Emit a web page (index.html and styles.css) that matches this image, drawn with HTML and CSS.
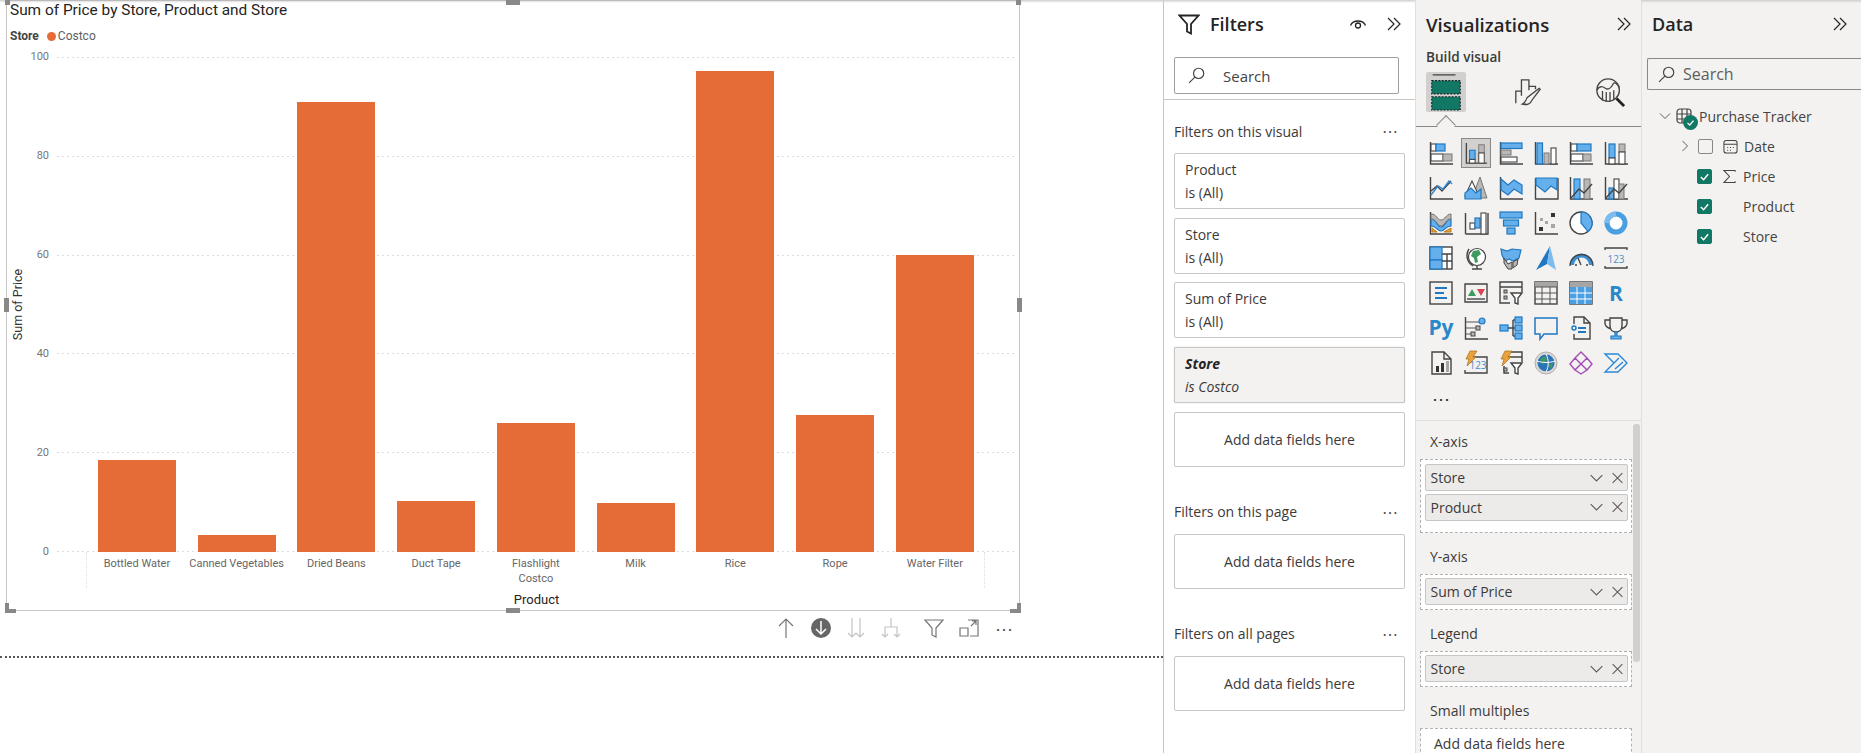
FILE: index.html
```html
<!DOCTYPE html>
<html lang="en">
<head>
    <meta charset="UTF-8">
    <meta name="viewport" content="width=device-width, initial-scale=1">
    <title>Purchase Tracker</title>
    <link rel="stylesheet" href="styles.css">
</head>
<body>
<svg class="defs" aria-hidden="true">
    <symbol id="chevrons" viewBox="0 0 16 16"><path d="M2 2l6 6-6 6M8 2l6 6-6 6"/></symbol>
    <symbol id="search" viewBox="0 0 16 16"><circle cx="10" cy="6" r="4.8"/><path d="M6.5 9.5L1 15"/></symbol>
    <symbol id="down" viewBox="0 0 12 12"><path d="M1 3.5l5 5 5-5"/></symbol>
    <symbol id="close" viewBox="0 0 12 12"><path d="M1.5 1.5l9 9M10.5 1.5l-9 9"/></symbol>
    <symbol id="check" viewBox="0 0 12 12"><path d="M2 6.5l3 3 5-6"/></symbol>
</svg>
<div class="topshade"></div>
<div class="app">
    <main class="canvas">
        <section class="visual">
            <i class="handle h-tl"></i><i class="handle h-tc"></i><i class="handle h-tr"></i>
            <i class="handle h-ml"></i><i class="handle h-mr"></i>
            <i class="handle h-bl"></i><i class="handle h-bc"></i><i class="handle h-br"></i>
            <div class="chart-title">Sum of Price by Store, Product and Store</div>
            <div class="chart-legend"><b>Store</b><i class="legend-dot"></i><span>Costco</span></div>
            <div class="chart-body">
                <div class="y-title"><span>Sum of Price</span></div>
                <div class="y-ticks"><span>100</span><span>80</span><span>60</span><span>40</span><span>20</span><span>0</span></div>
                <div class="plot">
                    <div class="gridlines"><i></i><i></i><i></i><i></i><i></i><i></i></div>
                    <div class="bars">
                        <div class="bar" style="height:18.5%"></div>
                        <div class="bar" style="height:3.4%"></div>
                        <div class="bar" style="height:91%"></div>
                        <div class="bar" style="height:10.3%"></div>
                        <div class="bar" style="height:26.1%"></div>
                        <div class="bar" style="height:9.9%"></div>
                        <div class="bar" style="height:97.2%"></div>
                        <div class="bar" style="height:27.6%"></div>
                        <div class="bar" style="height:60%"></div>
                    </div>
                </div>
            </div>
            <div class="x-labels">
                <span>Bottled Water</span><span>Canned Vegetables</span><span>Dried Beans</span>
                <span>Duct Tape</span><span>Flashlight<br>Costco</span><span>Milk</span>
                <span>Rice</span><span>Rope</span><span>Water Filter</span>
            </div>
            <div class="x-title">Product</div>
        </section>
        <div class="visual-tools">
            <svg viewBox="0 0 22 22"><path class="t-dark" d="M11 21V2M4 9l7-7 7 7"/></svg>
            <svg viewBox="0 0 22 22"><circle class="t-fill" cx="11" cy="11" r="10"/><path class="t-white" d="M11 4v13M6 12l5 5 5-5"/></svg>
            <svg viewBox="0 0 22 22"><path class="t-light" d="M7 1v19M3 16l4 4 4-4M15 1v19M11 16l4 4 4-4"/></svg>
            <svg viewBox="0 0 22 22"><path class="t-light" d="M11 1v9M5 20v-10h12v10M2 17l3 3 3-3M14 17l3 3 3-3"/></svg>
            <svg class="tool-gap" viewBox="0 0 22 22"><path class="t-dark" d="M2 3h18l-7 8v9l-4-2v-7z"/></svg>
            <svg viewBox="0 0 22 22"><path class="t-dark" d="M10 3h10v16h-8M2 11h8v8H2zM13 9l5-5M14 4h4v4"/></svg>
            <div class="tool-dots">&#8943;</div>
        </div>
        <div class="page-end"></div>
    </main>

    <aside class="filters">
        <div class="filters-head">
            <svg class="funnel" viewBox="0 0 22 22"><path d="M1.5 2.5h19l-7.5 8.5v9.5l-4-2V11z"/></svg>
            <h2>Filters</h2>
            <svg class="eye" viewBox="0 0 18 14"><path d="M1.5 8.5C4 2.5 14 2.5 16.5 8.5"/><circle cx="9" cy="8.5" r="2.5"/></svg>
            <svg class="chev"><use href="#chevrons"/></svg>
        </div>
        <div class="filters-search">
            <svg class="search-icon"><use href="#search"/></svg>
            <span>Search</span>
        </div>
        <div class="filters-list">
            <div class="filter-head"><span>Filters on this visual</span><em>&#8943;</em></div>
            <div class="filter-card"><div>Product</div><div>is (All)</div></div>
            <div class="filter-card"><div>Store</div><div>is (All)</div></div>
            <div class="filter-card"><div>Sum of Price</div><div>is (All)</div></div>
            <div class="filter-card filter-active"><div><b>Store</b></div><div>is Costco</div></div>
            <div class="filter-add">Add data fields here</div>
            <div class="filter-head filter-next"><span>Filters on this page</span><em>&#8943;</em></div>
            <div class="filter-add">Add data fields here</div>
            <div class="filter-head filter-next"><span>Filters on all pages</span><em>&#8943;</em></div>
            <div class="filter-add">Add data fields here</div>
        </div>
    </aside>

    <aside class="viz">
        <div class="pane-head">
            <h2>Visualizations</h2>
            <svg class="chev"><use href="#chevrons"/></svg>
        </div>
        <div class="build-label">Build visual</div>
        <div class="viz-tabs">
            <div class="viz-tab viz-tab-on">
                <svg viewBox="0 0 32 40"><path class="tab-rule" d="M2 2h24"/><rect class="tab-block" x="1" y="8" width="30" height="14"/><rect class="tab-block" x="1" y="25" width="30" height="14"/></svg>
            </div>
            <div class="viz-tab">
                <svg viewBox="0 0 32 32"><path class="vk" d="M3 28V15h6M9 20V3h8v11M17 10h7v3M11 29h3"/><path class="vk" d="M28 12L15 22c-1 3-3 6-5 7 4 1 9 0 10-4l9-12z"/></svg>
            </div>
            <div class="viz-tab">
                <svg viewBox="0 0 32 32"><circle class="vk" cx="14" cy="14" r="12"/><path class="vk" d="M2 14c3-5 6-4 9-2s6 0 8-4 5 0 7 3M8 25V15M12 26V16M16 26V16M20 24V14"/><path class="vk-heavy" d="M23 23l8 8"/></svg>
            </div>
        </div>
        <div class="viz-grid">
            <!-- row 1 -->
            <svg viewBox="0 0 24 24"><path class="vk" d="M1.5 1v22H24"/><rect class="vw" x="2" y="3" width="5" height="7"/><rect class="vb" x="7" y="3" width="9" height="7"/><rect class="vw" x="2" y="13" width="12" height="7"/><rect class="vg" x="14" y="13" width="9" height="7"/></svg>
            <svg class="viz-on" viewBox="0 0 24 24"><path class="vk" d="M1.5 1v22H24"/><rect class="vb" x="5" y="9" width="6" height="10"/><rect class="vw" x="5" y="19" width="6" height="4"/><rect class="vg" x="15" y="3" width="6" height="9"/><rect class="vw" x="15" y="12" width="6" height="11"/></svg>
            <svg viewBox="0 0 24 24"><path class="vk" d="M1.5 1v22H24"/><rect class="vb" x="2" y="2" width="21" height="5.5"/><rect class="vg" x="2" y="9" width="10" height="5"/><rect class="vw" x="2" y="16" width="16" height="5"/></svg>
            <svg viewBox="0 0 24 24"><path class="vk" d="M1.5 1v22H24"/><rect class="vb" x="3" y="2" width="5.5" height="21"/><rect class="vg" x="10" y="12" width="5" height="11"/><rect class="vw" x="17" y="7" width="5" height="16"/></svg>
            <svg viewBox="0 0 24 24"><path class="vk" d="M1.5 1v22H24"/><rect class="vw" x="2" y="3" width="6" height="7"/><rect class="vb" x="8" y="3" width="14" height="7"/><rect class="vw" x="2" y="13" width="12" height="7"/><rect class="vg" x="14" y="13" width="8" height="7"/></svg>
            <svg viewBox="0 0 24 24"><path class="vk" d="M1.5 1v22H24"/><rect class="vb" x="5" y="3" width="6" height="14"/><rect class="vw" x="5" y="17" width="6" height="6"/><rect class="vg" x="15" y="3" width="6" height="8"/><rect class="vw" x="15" y="11" width="6" height="12"/></svg>
            <!-- row 2 -->
            <svg viewBox="0 0 24 24"><path class="vk" d="M1.5 1v22H24"/><path class="vk" d="M2 15l6-5 5 5 9-10"/><path class="vl" d="M2 19l7-9 5 3 6-8 3 3"/></svg>
            <svg viewBox="0 0 24 24"><path class="vg" d="M8 22l8-21 7 21z"/><path class="vw" d="M8 5l-7 15h14z"/><path class="vb" d="M1 23v-6l6-5 5 5 5-4v10z"/></svg>
            <svg viewBox="0 0 24 24"><path class="vk" d="M1.5 1v22H24"/><path class="vb" d="M2 3l7 6 6-5 8 5v9l-8-5-6 6-7-5z"/></svg>
            <svg viewBox="0 0 24 24"><path class="vk" d="M1.5 2v21H24V2"/><path class="vb" d="M2 2h21v12l-6-4-6 6-9-7z"/></svg>
            <svg viewBox="0 0 24 24"><path class="vk" d="M1.5 1v22H24"/><rect class="vb" x="5" y="3" width="6" height="20"/><rect class="vg" x="15" y="3" width="6" height="20"/><path class="vk" d="M2 22l8-9 5 4 8-9"/></svg>
            <svg viewBox="0 0 24 24"><path class="vk" d="M1.5 1v22H24"/><rect class="vb" x="5" y="12" width="5" height="11"/><rect class="vw" x="10" y="3" width="5" height="20"/><rect class="vg" x="15" y="8" width="5" height="15"/><path class="vk" d="M2 22l8-9 5 4 8-9"/></svg>
            <!-- row 3 -->
            <svg viewBox="0 0 24 24"><path class="vk" d="M1.5 1v22H24"/><path class="vo" d="M3 17l5 4h-5zM15 21l7-4v4z"/><path class="vb" d="M2 8c6 0 6 8 10 8s5-8 10-8v7c-6 0-6 5-10 5S8 15 2 15z"/><path class="vg" d="M2 3c6 0 6 6 10 6s5-6 10-6v5c-6 0-6 7-10 7S8 8 2 8z"/></svg>
            <svg viewBox="0 0 24 24"><path class="vk" d="M1.5 23V2M1.5 23H24V2"/><rect class="vw" x="6" y="12" width="5" height="6"/><rect class="vb" x="11" y="7" width="5" height="10"/><rect class="vw" x="17" y="2" width="5" height="21"/></svg>
            <svg viewBox="0 0 24 24"><rect class="vb" x="1" y="1" width="22" height="6"/><rect class="vb" x="4.5" y="9" width="15" height="6"/><rect class="vb" x="8" y="17" width="8" height="6"/></svg>
            <svg viewBox="0 0 24 24"><path class="vk" d="M1.5 1v22H24"/><rect class="vd" x="17" y="2" width="4" height="4"/><rect class="vd" x="5" y="16" width="4" height="4"/><rect class="vg-n" x="6" y="7" width="3" height="3"/><rect class="vg-n" x="11" y="10" width="3" height="3"/><rect class="vg-n" x="17" y="13" width="4" height="4"/></svg>
            <svg viewBox="0 0 24 24"><circle class="vw-k" cx="12" cy="12" r="11"/><path class="vb" d="M12 1a11 11 0 0 1 7 19.5L12 12z"/></svg>
            <svg viewBox="0 0 24 24"><circle class="vring" cx="12" cy="12" r="9"/><path class="vring-w" d="M3 12A9 9 0 0 1 12 3"/></svg>
            <!-- row 4 -->
            <svg viewBox="0 0 24 24"><rect class="vw-k" x="1" y="1" width="22" height="22"/><rect class="vb" x="1" y="1" width="12" height="13"/><rect class="vb" x="1" y="14" width="12" height="9"/><path class="vk" d="M13 8h10M18 8v15M13 15h10"/></svg>
            <svg viewBox="0 0 24 24"><circle class="vglobe" cx="13" cy="11" r="8.5"/><path class="vgreen" d="M9 5l6-1 2 4-4 3 1 5-3 1-1-5-3-2z"/><path class="vk" d="M5 3a12 12 0 0 0 4 17M13 20v3M8 23h10"/></svg>
            <svg viewBox="0 0 24 24"><path class="vb" d="M2 3l6 2 5-2 9 1-2 8-6 3-4-2-4 2-3-6z"/><path class="vg-k" d="M5 12l4 6 4-2v7H9l-4-6zM14 16l5-3-1 6-4 3z"/></svg>
            <svg viewBox="0 0 24 24"><path class="vazure" d="M16 0L2 24l11-6z"/><path class="vazure-l" d="M16 0l-3 18 9 6z"/></svg>
            <svg viewBox="0 0 24 24"><path class="vgauge" d="M3 19a9.5 9.5 0 0 1 19 0"/><path class="vk" d="M1 20a11.5 11.5 0 0 1 23 0M12 19l-3-7M6 19h2M17 19h2"/></svg>
            <svg viewBox="0 0 24 24"><path class="vk" d="M1 4V2h22v2M1 20v2h22v-2"/><text class="vtext" x="12" y="17">123</text></svg>
            <!-- row 5 -->
            <svg viewBox="0 0 24 24"><rect class="vk" x="1" y="1" width="22" height="22"/><path class="vline-b" d="M6 7h12M6 12h9M6 17h12"/></svg>
            <svg viewBox="0 0 24 24"><path class="vk" d="M1 3h22v18H1z"/><path class="vgreen" d="M4 15l4-7 4 7z"/><path class="vred" d="M13 8h8l-4 7z"/><path class="vk" d="M3 18h18"/></svg>
            <svg viewBox="0 0 24 24"><path class="vk" d="M23 11V1H1v21h10M1 6h22"/><rect class="vg-k" x="5" y="9" width="3" height="3"/><rect class="vg-k" x="5" y="15" width="3" height="3"/><path class="vw-k" d="M12 12h11l-4 5v6l-3-1v-5z"/></svg>
            <svg viewBox="0 0 24 24"><rect class="vk" x="1" y="1" width="22" height="22"/><rect class="vg-n" x="1" y="1" width="22" height="5"/><path class="vk-thin" d="M1 6h22M1 12h22M1 18h22M8 6v17M16 6v17"/></svg>
            <svg viewBox="0 0 24 24"><rect class="vk" x="1" y="1" width="22" height="22"/><rect class="vg-n" x="1" y="1" width="22" height="5"/><rect class="vb-n" x="1" y="6" width="15" height="17"/><rect class="vb-n" x="16" y="6" width="7" height="17"/><path class="vk-white" d="M1 12h22M1 18h22M8 6v17M16 6v17"/></svg>
            <svg viewBox="0 0 24 24"><text class="vcode" x="12" y="20">R</text></svg>
            <!-- row 6 -->
            <svg viewBox="0 0 24 24"><text class="vcode" x="12" y="19">Py</text></svg>
            <svg viewBox="0 0 24 24"><path class="vk" d="M1.5 1v22H24"/><path class="vk-thin" d="M2 6h14M2 12h10M2 18h6"/><circle class="vb" cx="18" cy="5" r="3"/><rect class="vg-k" x="12" y="10" width="4" height="4"/><rect class="vg-k" x="7" y="16" width="4" height="4"/></svg>
            <svg viewBox="0 0 24 24"><path class="vk" d="M9 12h5M14 4v16M14 4h2M14 12h2M14 20h2"/><rect class="vb" x="1" y="9" width="8" height="6"/><rect class="vb" x="16" y="1" width="7" height="6"/><rect class="vb" x="16" y="9" width="7" height="6"/><rect class="vb" x="16" y="17" width="7" height="6"/></svg>
            <svg viewBox="0 0 24 24"><path class="vq" d="M1 2h22v16H10l-4 5v-5H1z"/></svg>
            <svg viewBox="0 0 24 24"><path class="vk" d="M5 8V1h10l6 6v16H5v-5M15 1v6h6"/><circle class="vq" cx="5" cy="12" r="2"/><path class="vline-b" d="M9 12h8M9 16h8"/></svg>
            <svg viewBox="0 0 24 24"><path class="vk" d="M6 2h12v8c0 8-12 8-12 0zM6 4H1v3c0 3 3 5 6 6M18 4h5v3c0 3-3 5-6 6"/><path class="vb" d="M11 16h2v4h4v3H7v-3h4z"/></svg>
            <!-- row 7 -->
            <svg viewBox="0 0 24 24"><path class="vk" d="M3 1h12l7 7v15H3zM15 1v7h7"/><rect class="vd" x="7" y="15" width="3" height="6"/><rect class="vd" x="12" y="12" width="3" height="9"/><rect class="vg-n" x="17" y="10" width="3" height="11"/></svg>
            <svg viewBox="0 0 24 24"><path class="vk" d="M8 6h15v16H1v-3"/><text class="vtext" x="14" y="18">123</text><path class="vbolt" d="M6 0h7l-4 6h3L3 15l2-7H2z"/></svg>
            <svg viewBox="0 0 24 24"><path class="vk" d="M10 1h13v10M10 22H5V15M8 6h15"/><rect class="vg-k" x="5" y="17" width="3" height="3"/><path class="vw-k" d="M12 12h11l-4 5v6l-3-1v-5z"/><path class="vbolt" d="M6 0h7l-4 6h3L3 15l2-7H2z"/></svg>
            <svg viewBox="0 0 24 24"><circle class="vearth-rim" cx="12" cy="12" r="11"/><circle class="vearth" cx="12" cy="12" r="8.5"/><path class="vgreen" d="M6 8l5-3 2 4-4 5zM14 14l5-2-2 6z"/><path class="vk-white" d="M3 10c6 2 12 2 18 0M12 3c3 6 3 12 0 18"/></svg>
            <svg viewBox="0 0 24 24"><path class="vpurple" d="M12 1l6 6-6 6-6-6zM6 7l6 6-6 6-5-6zM18 7l5 6-5 6-6-6zM12 13l6 6-6 4-6-4z"/></svg>
            <svg viewBox="0 0 24 24"><path class="vflow" d="M1 3h13l9 9-9 9H1l9-9zM7 15l8-8M11 18l8-7"/></svg>
            <!-- row 8 -->
            <span class="viz-more">&#8943;</span>
        </div>
        <div class="viz-fields">
            <div class="well-label well-first">X-axis</div>
            <div class="well well-two">
                <div class="pill"><span>Store</span><svg class="pill-down"><use href="#down"/></svg><svg class="pill-x"><use href="#close"/></svg></div>
                <div class="pill"><span>Product</span><svg class="pill-down"><use href="#down"/></svg><svg class="pill-x"><use href="#close"/></svg></div>
            </div>
            <div class="well-label">Y-axis</div>
            <div class="well">
                <div class="pill"><span>Sum of Price</span><svg class="pill-down"><use href="#down"/></svg><svg class="pill-x"><use href="#close"/></svg></div>
            </div>
            <div class="well-label">Legend</div>
            <div class="well">
                <div class="pill"><span>Store</span><svg class="pill-down"><use href="#down"/></svg><svg class="pill-x"><use href="#close"/></svg></div>
            </div>
            <div class="well-label">Small multiples</div>
            <div class="well well-empty">Add data fields here</div>
            <div class="viz-scroll"></div>
        </div>
    </aside>

    <aside class="data">
        <div class="pane-head">
            <h2>Data</h2>
            <svg class="chev"><use href="#chevrons"/></svg>
        </div>
        <div class="data-search">
            <svg class="search-icon"><use href="#search"/></svg>
            <span>Search</span>
        </div>
        <div class="tree">
            <div class="tree-row tree-table">
                <svg class="tree-arrow"><use href="#down"/></svg>
                <span class="table-icon">
                    <svg viewBox="0 0 16 16"><rect x="1" y="1" width="14" height="14" rx="3"/><path d="M1 6h14M1 11h14M6 1v14M11 1v14"/></svg>
                    <i class="table-badge"><svg><use href="#check"/></svg></i>
                </span>
                <span>Purchase Tracker</span>
            </div>
            <div class="tree-row">
                <svg class="tree-arrow tree-arrow-side"><use href="#down"/></svg>
                <i class="check"></i>
                <svg class="field-icon" viewBox="0 0 16 16"><rect x="1" y="1.5" width="14" height="13.5" rx="2.5"/><path d="M1 5.5h14M4.5 9h1M7.5 9h1M10.5 9h1M4.5 12h1M7.5 12h1"/></svg>
                <span>Date</span>
            </div>
            <div class="tree-row">
                <i class="check check-on"><svg><use href="#check"/></svg></i>
                <svg class="field-icon" viewBox="0 0 16 16"><path d="M14 3V1.5H2L8 8l-6 6.5h12V13"/></svg>
                <span>Price</span>
            </div>
            <div class="tree-row">
                <i class="check check-on"><svg><use href="#check"/></svg></i>
                <i class="field-icon"></i>
                <span>Product</span>
            </div>
            <div class="tree-row">
                <i class="check check-on"><svg><use href="#check"/></svg></i>
                <i class="field-icon"></i>
                <span>Store</span>
            </div>
        </div>
    </aside>
</div>
</body>
</html>
```

FILE: styles.css
```css
*{
    box-sizing: border-box;
}
html,body{
    margin: 0;
    height: 100%;
    overflow: hidden;
    background: #fff;
    color: #3b3a39;
    font-family: "Open Sans", "Liberation Sans", sans-serif;
    font-size: 14px;
}
h2{
    margin: 0;
    font-size: 18px;
    font-weight: 600;
    color: #252423;
}
i,em{
    font-style: normal;
}
.defs{
    position: absolute;
    width: 0;
    height: 0;
}
.topshade{
    position: absolute;
    left: 0;
    right: 0;
    top: 0;
    height: 3px;
    background: linear-gradient(#cfcfcf, rgba(230,230,230,0));
}
.app{
    display: flex;
    width: 1861px;
    height: 753px;
}

/* report canvas */
.canvas{
    width: 1163px;
    flex: none;
}
.visual{
    position: relative;
    width: 1014px;
    height: 611px;
    margin-left: 6px;
    border: 1px solid #c8c6c4;
    border-top-color: #bbb;
    font-family: Roboto, "Liberation Sans", sans-serif;
}
.handle{
    position: absolute;
    background: #8a8886;
}
.h-tl,.h-tr,.h-bl,.h-br{
    width: 5px;
    height: 5px;
}
.h-tl{ left: -2px; top: -1px; }
.h-tr{ right: -2px; top: -1px; }
.h-bl{ left: -2px; bottom: -3px; width: 11px; height: 4px; }
.h-br{ right: -2px; bottom: -3px; width: 11px; height: 4px; }
.h-bl::after,.h-br::after{
    content: "";
    position: absolute;
    bottom: 0;
    width: 4px;
    height: 10px;
    background: #8a8886;
}
.h-bl::after{ left: 0; }
.h-br::after{ right: 0; }
.h-tc,.h-bc{
    left: 499px;
    width: 14px;
    height: 5px;
}
.h-tc{ top: -1px; }
.h-bc{ bottom: -3px; }
.h-ml,.h-mr{
    top: 297px;
    width: 5px;
    height: 14px;
}
.h-ml{ left: -3px; }
.h-mr{ right: -3px; }

.chart-title{
    height: 19px;
    padding-left: 3px;
    font-size: 15.4px;
    line-height: 19px;
    color: #252423;
    white-space: nowrap;
}
.chart-legend{
    display: flex;
    align-items: center;
    height: 16px;
    margin-top: 8px;
    padding-left: 3px;
    font-size: 12px;
    color: #605e5c;
}
.chart-legend b{
    margin-right: 8px;
    color: #444;
}
.legend-dot{
    width: 9px;
    height: 9px;
    margin-right: 2px;
    border-radius: 50%;
    background: #e66c37;
}
.chart-body{
    display: flex;
    height: 495px;
    margin-top: 13px;
}
.y-title{
    display: flex;
    align-items: center;
    justify-content: center;
    width: 22px;
    flex: none;
    font-size: 12.5px;
    color: #333;
}
.y-title span{
    white-space: nowrap;
    transform: rotate(-90deg);
}
.y-ticks{
    display: flex;
    flex-direction: column;
    justify-content: space-between;
    width: 20px;
    flex: none;
    font-size: 11px;
    color: #777;
    text-align: right;
}
.y-ticks span{
    height: 0;
    line-height: 0;
}
.plot{
    position: relative;
    width: 959px;
    margin-left: 8px;
    flex: none;
}
.gridlines{
    position: absolute;
    left: 0;
    right: 0;
    top: 0;
    bottom: 0;
    display: flex;
    flex-direction: column;
    justify-content: space-between;
}
.gridlines i{
    display: block;
    height: 1px;
    background: repeating-linear-gradient(90deg, #dcdcdc 0 2px, transparent 2px 5px);
}
.bars{
    position: relative;
    display: grid;
    grid-template-columns: repeat(9, 99.75px);
    align-items: end;
    height: 100%;
    padding-left: 30px;
}
.bar{
    justify-self: center;
    width: 78px;
    background: #e66c37;
}
.x-labels{
    display: grid;
    grid-template-columns: repeat(9, 99.75px);
    height: 36px;
    width: 899px;
    margin-left: 79px;
    padding-top: 4px;
    border-left: 1px dotted #ddd;
    border-right: 1px dotted #ddd;
    font-size: 11px;
    line-height: 15px;
    color: #666;
    text-align: center;
    white-space: nowrap;
}
.x-title{
    height: 16px;
    margin-top: 4px;
    padding-left: 47px;
    font-size: 13px;
    line-height: 16px;
    color: #252423;
    text-align: center;
}
.visual-tools{
    display: flex;
    align-items: center;
    justify-content: flex-end;
    gap: 13px;
    width: 1015px;
    height: 34px;
}
.visual-tools svg{
    width: 22px;
    height: 22px;
    fill: none;
}
.tool-gap{
    margin-left: 8px;
}
.t-dark{ stroke: #767676; stroke-width: 1.2; fill: none; }
.t-light{ stroke: #c4c4c4; stroke-width: 1.2; fill: none; }
.t-white{ stroke: #fff; stroke-width: 1.5; fill: none; }
.t-fill{ fill: #666; }
.tool-dots{
    width: 22px;
    font-size: 18px;
    line-height: 22px;
    color: #555;
    text-align: center;
}
.page-end{
    margin-top: 11px;
    border-top: 2px dotted #555;
}

/* filters pane */
.filters{
    width: 252px;
    flex: none;
    border-left: 1px solid #c8c6c4;
    background: #fff;
}
.filters-head{
    display: flex;
    align-items: center;
    height: 48px;
    padding-left: 14px;
}
.funnel{
    width: 22px;
    height: 22px;
    margin-right: 10px;
    fill: none;
    stroke: #252423;
    stroke-width: 1.8;
}
.filters-head h2{
    flex: 1;
}
.eye{
    width: 18px;
    height: 14px;
    margin-right: 19px;
    fill: none;
    stroke: #252423;
    stroke-width: 1.3;
}
.chev{
    width: 16px;
    height: 16px;
    margin-right: 13px;
    flex: none;
    fill: none;
    stroke: #252423;
    stroke-width: 1.2;
}
.filters-search{
    display: flex;
    align-items: center;
    width: 225px;
    height: 37px;
    margin: 9px 0 0 10px;
    border: 1px solid #a19f9d;
    border-radius: 2px;
    font-size: 15px;
    color: #444;
}
.search-icon{
    width: 17px;
    height: 17px;
    fill: none;
    stroke: #444;
    stroke-width: 1.1;
}
.filters-search .search-icon{
    margin: 0 18px 0 13px;
}
.filters-list{
    margin-top: 5px;
    padding: 19px 10px 0;
    border-top: 1px solid #c8c6c4;
}
.filter-head{
    display: flex;
    align-items: center;
    justify-content: space-between;
    height: 24px;
    margin-bottom: 10px;
}
.filter-head em{
    width: 30px;
    font-size: 16px;
    text-align: center;
    color: #555;
}
.filter-next{
    margin-top: 33px;
}
.filter-card{
    height: 56px;
    margin-bottom: 8.7px;
    padding: 4px 10px 0;
    border: 1px solid #c8c6c4;
    border-radius: 2px;
    line-height: 23px;
}
.filter-active{
    background: #f3f2f1;
    font-style: italic;
    box-shadow: 0 0 1px #aaa;
}
.filter-active b{
    color: #252423;
}
.filter-add{
    display: flex;
    align-items: center;
    justify-content: center;
    height: 55px;
    border: 1px solid #c8c6c4;
    border-radius: 2px;
}

/* visualizations pane */
.viz{
    position: relative;
    width: 226px;
    flex: none;
    background: #f3f2f1;
    border-left: 1px solid #e1dfdd;
}
.pane-head{
    display: flex;
    align-items: center;
    justify-content: space-between;
    height: 48px;
    padding-left: 10px;
}
.viz .pane-head .chev{
    margin-right: 9px;
}
.viz h2{
    font-size: 18.6px;
}
.build-label{
    height: 18px;
    padding-left: 10px;
    font-size: 13.6px;
    font-weight: 600;
    line-height: 18px;
    color: #3b3a39;
}
.viz-tabs{
    position: relative;
    display: flex;
    justify-content: space-between;
    height: 55px;
    margin-top: 6px;
    padding: 0 11px 0 10px;
    border-bottom: 1px solid #8a8886;
}
.viz-tabs::after{
    content: "";
    position: absolute;
    left: 23px;
    bottom: -6px;
    width: 13px;
    height: 13px;
    background: #f3f2f1;
    border-left: 1px solid #8a8886;
    border-top: 1px solid #8a8886;
    transform: rotate(45deg);
}
.viz-tab{
    display: flex;
    align-items: center;
    justify-content: center;
    width: 40px;
    height: 40px;
    border-radius: 2px;
}
.viz-tab svg{
    width: 30px;
    height: 32px;
}
.viz-tab-on svg{
    width: 32px;
    height: 38px;
}
.viz-tab-on{
    background: #d2d0ce;
}
.tab-rule{
    stroke: #333;
    stroke-width: 1.2;
}
.tab-block{
    fill: #117865;
    stroke: #222;
    stroke-width: 1.2;
    stroke-dasharray: 2 1.5;
}
.viz-grid{
    display: grid;
    grid-template-columns: repeat(6, 35px);
    grid-auto-rows: 35px;
    justify-items: center;
    align-items: center;
    height: 294px;
    padding: 8px 0 0 7px;
    border-bottom: 1px solid #e1dfdd;
}
.viz-grid svg{
    width: 24px;
    height: 24px;
    overflow: visible;
}
.viz-grid .viz-on{
    width: 30px;
    height: 30px;
    padding: 3px;
    background: #d2d0ce;
    border: 1px solid #8a8886;
}
.viz-more{
    font-size: 18px;
    line-height: 24px;
    color: #333;
}
.vk,.vk-thin,.vk-heavy,.vk-white,.vline-b,.vl,.vq,.vflow,.vpurple,.vgauge{
    fill: none;
}
.vk{ stroke: #444; stroke-width: 1.4; }
.vk-thin{ stroke: #555; stroke-width: 1; }
.vk-heavy{ stroke: #222; stroke-width: 3; }
.vk-white{ stroke: #fff; stroke-width: 1; }
.vl{ stroke: #2b88d8; stroke-width: 1.4; }
.vb{ fill: #64afec; stroke: #1f78c1; stroke-width: 1.2; }
.vb-n{ fill: #4a9fe0; }
.vg{ fill: #bab8b6; stroke: #777; stroke-width: 1; }
.vg-k{ fill: #bab8b6; stroke: #444; stroke-width: 1; }
.vg-n{ fill: #a8a6a4; }
.vw{ fill: #fff; stroke: #444; stroke-width: 1.1; }
.vw-k{ fill: #fff; stroke: #444; stroke-width: 1.4; }
.vo{ fill: #e8a33d; stroke: #b9791c; stroke-width: 1; }
.vd{ fill: #333; }
.vring{ fill: #fff; stroke: #4a9fe0; stroke-width: 5; }
.vring-w{ fill: none; stroke: #7cbcf0; stroke-width: 5; }
.vglobe{ fill: #fff; stroke: #444; stroke-width: 1.2; }
.vgreen{ fill: #3e9b5f; }
.vred{ fill: #d64550; }
.vazure{ fill: #1f78c1; }
.vazure-l{ fill: #7cbcf0; }
.vgauge{ stroke: #3a8fd6; stroke-width: 4; }
.vtext{
    font-size: 10px;
    fill: #4a8fc4;
    text-anchor: middle;
}
.vline-b{ stroke: #1f78c1; stroke-width: 1.8; }
.vcode{
    font-size: 21px;
    font-weight: 700;
    fill: #2b88c8;
    text-anchor: middle;
}
.vq{ stroke: #1f78c1; stroke-width: 1.5; }
.vbolt{ fill: #e8a33d; stroke: #a86a12; stroke-width: .7; }
.vearth-rim{ fill: #d9d8d6; stroke: #b3b0ad; }
.vearth{ fill: #2b74b8; }
.vpurple{ stroke: #a24bb5; stroke-width: 1.4; }
.vflow{ stroke: #2b88d8; stroke-width: 1.4; }

.viz-fields{
    padding: 0 0 0 4px;
}
.well-label{
    height: 24px;
    margin-top: 12px;
    margin-bottom: 5px;
    padding-left: 10px;
    line-height: 24px;
}
.well-first{
    margin-top: 9px;
}
.well{
    width: 212px;
    height: 36px;
    padding: 3px 3.5px;
    background: #fff;
    border: 1px dashed #b3b0ad;
}
.well-two{
    height: 74px;
    padding-top: 4px;
}
.well .pill + .pill{
    margin-top: 2.5px;
}
.well-empty{
    height: 60px;
    padding-left: 13px;
    padding-top: 5px;
}
.pill{
    display: flex;
    align-items: center;
    height: 27px;
    padding-left: 5px;
    background: #edebe9;
    border: 1px solid #c8c6c4;
    border-radius: 2px;
}
.pill span{
    flex: 1;
}
.pill-down,.pill-x{
    width: 15px;
    height: 14px;
    fill: none;
    stroke: #605e5c;
    stroke-width: 1;
}
.pill-down{
    margin-right: 7px;
}
.pill-x{
    width: 13px;
    margin-right: 3px;
}
.viz-scroll{
    position: absolute;
    left: 217px;
    top: 424px;
    width: 7px;
    height: 238px;
    background: #d2d0ce;
    border-radius: 3px;
}

/* data pane */
.data{
    width: 220px;
    flex: none;
    background: #f3f2f1;
    border-left: 1px solid #e1dfdd;
}
.data .pane-head{
    padding-left: 10px;
}
.data-search{
    display: flex;
    align-items: center;
    height: 32px;
    margin: 10px 0 0 5px;
    border: 1px solid #8a8886;
    border-right: 0;
    border-radius: 2px 0 0 2px;
    font-size: 16px;
    color: #605e5c;
}
.data-search .search-icon{
    margin: 0 8px 0 10px;
}
.tree{
    margin-top: 11px;
}
.tree-row{
    display: flex;
    align-items: center;
    height: 30px;
    padding-left: 55px;
    color: #444;
}
.tree-table{
    padding-left: 17px;
}
.tree-arrow{
    width: 12px;
    height: 12px;
    fill: none;
    stroke: #605e5c;
    stroke-width: 1;
}
.tree-table .tree-arrow{
    margin-right: 5px;
}
.tree-arrow-side{
    margin: 0 7px 0 -18px;
    transform: rotate(-90deg);
}
.table-icon{
    position: relative;
    width: 16px;
    height: 16px;
    flex: none;
}
.table-icon > svg{
    display: block;
    width: 16px;
    height: 16px;
    fill: none;
    stroke: #444;
    stroke-width: 1.2;
}
.table-badge{
    position: absolute;
    left: 7px;
    top: 7px;
    display: flex;
    align-items: center;
    justify-content: center;
    width: 15px;
    height: 15px;
    border-radius: 50%;
    background: #117865;
}
.table-badge svg{
    width: 9px;
    height: 9px;
    fill: none;
    stroke: #fff;
    stroke-width: 1.8;
}
.table-icon + span{
    margin-left: 7px;
}
.check{
    display: flex;
    align-items: center;
    justify-content: center;
    width: 15px;
    height: 15px;
    margin-right: 10px;
    flex: none;
    border: 1px solid #8a8886;
    border-radius: 2px;
}
.check-on{
    background: #117865;
    border-color: #117865;
}
.check svg{
    width: 11px;
    height: 11px;
    fill: none;
    stroke: #fff;
    stroke-width: 1.6;
}
.field-icon{
    width: 15px;
    height: 15px;
    margin-right: 6px;
    flex: none;
    fill: none;
    stroke: #444;
    stroke-width: 1.1;
}
```
